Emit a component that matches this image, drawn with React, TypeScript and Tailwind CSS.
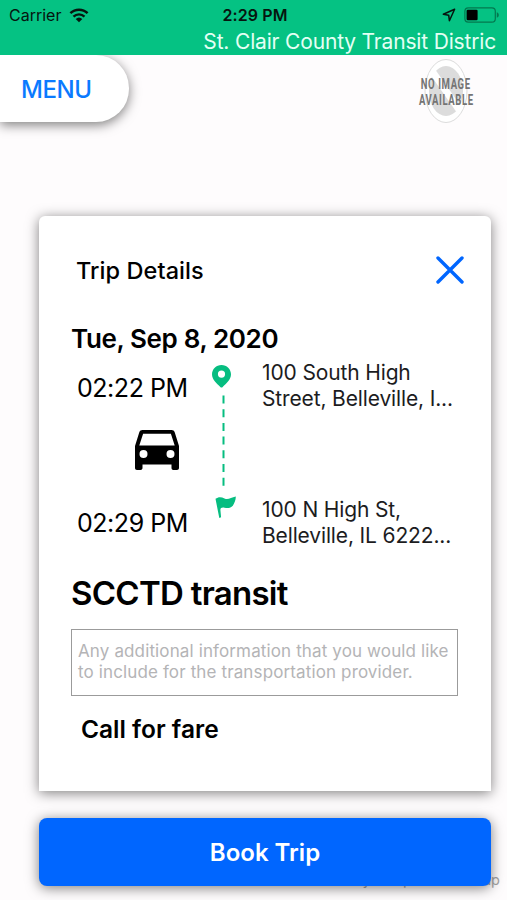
import React, { useState } from 'react';

interface Stop {
  time: string;
  lines: string[];
}

const STOPS: Stop[] = [
  { time: '02:22 PM', lines: ['100 South High', 'Street, Belleville, I...'] },
  { time: '02:29 PM', lines: ['100 N High St,', 'Belleville, IL 6222...'] },
];

const WifiIcon = () => (
  <svg className="ml-[8px] h-[15px] w-[20px]" viewBox="0 0 20 15" fill="none">
    <path d="M1.4 5.2a12.4 12.4 0 0 1 17.2 0" stroke="#06150f" strokeWidth="2.5" />
    <path d="M4.5 8.6a8 8 0 0 1 11 0" stroke="#06150f" strokeWidth="2.4" />
    <path d="M10 14.2 6.7 11a4.8 4.8 0 0 1 6.6 0Z" fill="#06150f" />
  </svg>
);

const BatteryIcon = () => (
  <svg className="h-[16px] w-[36px]" viewBox="0 0 36 16" fill="none">
    <rect x="0.9" y="0.9" width="30.4" height="14.2" rx="3.4" stroke="#04784f" strokeWidth="1.2" />
    <rect x="2.6" y="2.7" width="11" height="10.6" rx="1.2" fill="#000" />
    <path d="M32.8 5.2c1.3.5 2 1.5 2 2.8s-.7 2.3-2 2.8Z" fill="#04784f" />
  </svg>
);

const NoImage = () => (
  <div className="relative mt-[3px] mr-[32px] h-[66px] w-[58px]">
    <svg className="h-full w-full" viewBox="0 0 58 66" fill="none">
      <ellipse cx="29" cy="33" rx="21" ry="31.5" fill="#fff" stroke="#dcdcdc" />
      <ellipse cx="29" cy="33" rx="17" ry="25" fill="#dcdcdc" />
      <path d="M15 13 43 53" stroke="#fff" strokeWidth="7" />
    </svg>
    <div className="absolute inset-x-0 top-[18px] flex flex-col items-center font-['Roboto'] text-[14px] leading-[16px] font-bold whitespace-nowrap text-[#747474]">
      <span className="scale-x-[0.68] tracking-[0.9px]">NO IMAGE</span>
      <span className="scale-x-[0.68] tracking-[0.9px]">AVAILABLE</span>
    </div>
  </div>
);

const StopText = ({ lines }: { lines: string[] }) => (
  <div className="text-[21px] leading-[26px] tracking-[-0.14px] whitespace-nowrap text-[#1c1c1e]">
    {lines.map(line => (
      <div key={line}>{line}</div>
    ))}
  </div>
);

const App: React.FC = () => {
  const [note, setNote] = useState('');

  return (
    <div className="relative flex h-[900px] w-[507px] flex-col overflow-hidden bg-[#fefcfd] font-['Inter',sans-serif] text-black">
      <header className="h-[55px] shrink-0 bg-[#05c283]">
        <div className="grid h-[29px] grid-cols-3 items-center pr-[7px] pl-[9px] text-[16px] leading-[29px] text-[#06150f]">
          <div className="flex items-center">
            <span>Carrier</span>
            <WifiIcon />
          </div>
          <div className="pt-px pl-px text-center font-semibold tracking-[0.1px] whitespace-nowrap">2:29 PM</div>
          <div className="flex items-center justify-end gap-[8px]">
            <svg className="h-[14px] w-[14px]" viewBox="0 0 14 14" fill="none">
              <path d="M12.6 1.3 1.3 6.3l5.4.9.7 5.5Z" stroke="#06150f" strokeWidth="1.5" strokeLinejoin="round" />
            </svg>
            <BatteryIcon />
          </div>
        </div>
        <div className="pr-[11px] text-right text-[21px] leading-[25px] tracking-[-0.17px] whitespace-nowrap text-[#e4fff4]">
          St. Clair County Transit Distric
        </div>
      </header>

      <div className="flex h-[161px] shrink-0 items-start justify-between">
        <button className="h-[67px] w-[129px] rounded-r-[33px] bg-white pt-[2px] pl-[21px] text-left text-[24px] font-medium tracking-[-0.4px] text-[#0a7aff] shadow-[0_3px_12px_rgba(0,0,0,0.5)] [clip-path:inset(0_-20px_-20px_0)]">
          MENU
        </button>
        <NoImage />
      </div>

      <main className="mr-[16px] ml-[39px] flex h-[575px] shrink-0 flex-col rounded-t-[6px] bg-white shadow-[0_2px_13px_rgba(0,0,0,0.5)]">
        <div className="flex h-[107px] items-center justify-between pr-[27px] pl-[37px]">
          <h2 className="pt-[3px] text-[23.5px] font-medium tracking-[0.08px]">Trip Details</h2>
          <button aria-label="Close">
            <svg className="h-[28px] w-[28px]" viewBox="0 0 28 28" fill="none">
              <path d="M2 2 26 26M26 2 2 26" stroke="#0066ff" strokeWidth="3.4" strokeLinecap="round" />
            </svg>
          </button>
        </div>

        <div className="pl-[32px] text-[26px] leading-[32px] font-semibold tracking-[-0.36px]">Tue, Sep 8, 2020</div>

        <div className="grid h-[217px] grid-cols-[134px_51px_1fr] pl-[38px]">
          <div className="flex flex-col text-[25px] leading-[30px] tracking-[-0.45px] whitespace-nowrap">
            <div className="mt-[18px]">{STOPS[0].time}</div>
            <svg className="mt-[26px] ml-[57px] h-[42px] w-[46px]" viewBox="0 0 46 42" fill="none">
              <path
                fillRule="evenodd"
                d="M8.5 1h29c1.6 0 2.7.8 3.2 2.3L45 17v22c0 1.3-.9 2-2 2h-3.5c-1.3 0-2-.8-2-2v-3.5h-29V39c0 1.3-.8 2-2 2H3c-1.2 0-2-.8-2-2V17L5.3 3.3C5.8 1.8 6.9 1 8.5 1Zm.6 3.8L5.3 16.5h35.4L36.9 4.8ZM9.5 21a4 4 0 1 0 0 8 4 4 0 0 0 0-8Zm27 0a4 4 0 1 0 0 8 4 4 0 0 0 0-8Z"
                fill="#000"
              />
            </svg>
            <div className="mt-[37px]">{STOPS[1].time}</div>
          </div>
          <div className="pt-[9px]">
            <svg className="h-[156px] w-[26px]" viewBox="0 0 26 156" fill="none">
              <path
                fillRule="evenodd"
                d="M10.5 1c5.3 0 9.5 4.1 9.5 9.3 0 5.4-4.7 9.2-8.3 12.6-.8.7-1.6.7-2.4 0C5.7 19.5 1 15.7 1 10.3 1 5.1 5.2 1 10.5 1Zm0 5.5a3.6 3.6 0 1 0 0 7.2 3.6 3.6 0 0 0 0-7.2Z"
                fill="#06bd80"
              />
              <path d="M12.5 31.5v91" stroke="#06bd80" strokeWidth="2" strokeDasharray="8 5.7" />
              <path
                d="M4.5 134.8c2.8-2.3 6-2 9-.4 3.6 1.8 6.4-.9 11.3-1.9.1 3.8-1.4 6.5-3 9.3-2.3 2.6-5.2 2.5-8.3 1.9-2.6-.5-4.3.2-4.1 2.4l.7 7.200-1.800.8Z"
                fill="#06bd80"
              />
            </svg>
          </div>
          <div className="flex flex-col gap-[85px] pt-[5px]">
            {STOPS.map(stop => (
              <StopText key={stop.time} lines={stop.lines} />
            ))}
          </div>
        </div>

        <h1 className="pt-px pl-[32px] text-[33px] leading-[40px] font-semibold tracking-[-0.72px]">SCCTD transit</h1>

        <textarea
          value={note}
          onChange={e => setNote(e.target.value)}
          placeholder={'Any additional information that you would like\nto include for the transportation provider.'}
          className="mt-[16px] ml-[32px] h-[67px] w-[387px] shrink-0 resize-none overflow-hidden border border-[#9b9b9b] px-[6px] pt-[11px] text-[17px] leading-[21px] tracking-[0.13px] whitespace-pre placeholder:text-[#b4b4b6]"
        />

        <div className="mt-[17px] pl-[42px] text-[24.5px] leading-[32px] font-semibold">Call for fare</div>
      </main>

      <button className="relative z-10 mt-[27px] mr-[16px] ml-[39px] h-[68px] shrink-0 rounded-[8px] bg-[#0066ff] pt-[2px] text-[24px] font-semibold text-white shadow-[0_2px_13px_rgba(0,0,0,0.5)]">
        Book Trip
      </button>
      <div className="-mt-[16px] pr-[7px] text-right text-[14.5px] leading-[20px] whitespace-nowrap text-[#a5a5a5]">
        by © OpenStreetMap
      </div>
    </div>
  );
};

export default App;
